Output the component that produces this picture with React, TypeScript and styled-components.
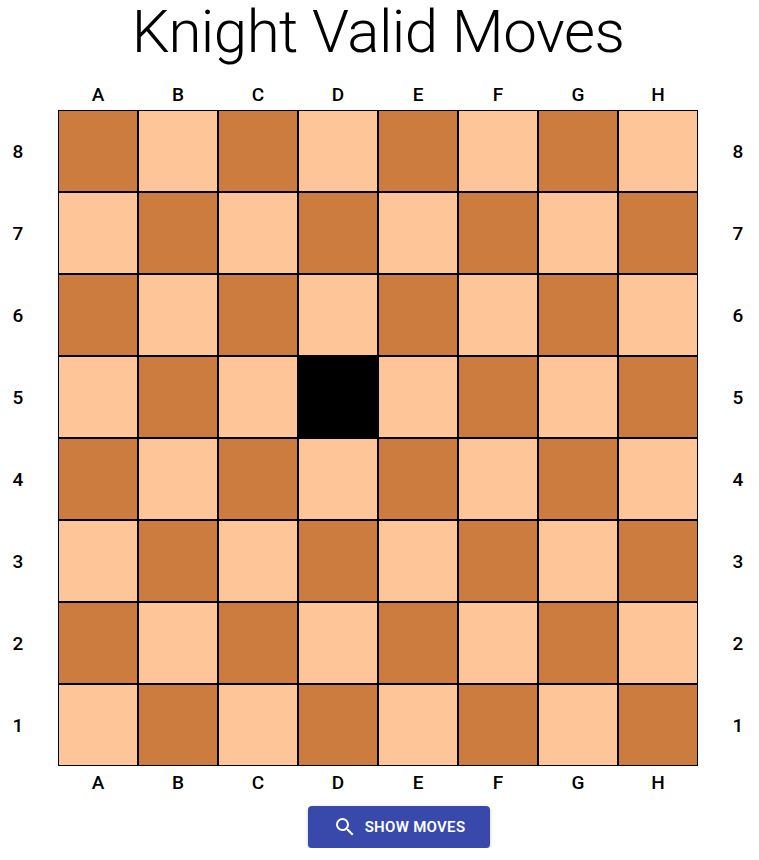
import { Fragment } from "react";
import styled, { createGlobalStyle } from "styled-components";

const GlobalStyle = createGlobalStyle`
  html, body {
    margin: 0;
    padding: 0;
    background: #fff;
    font-family: Roboto, "Liberation Sans", sans-serif;
    color: #000;
  }
`;

const Page = styled.div`
  width: 756px;
  display: flex;
  flex-direction: column;
  align-items: center;
`;

const Title = styled.h1`
  margin: 0;
  height: 72px;
  font-size: 60px;
  font-weight: 300;
  line-height: 64px;
  letter-spacing: -0.5px;
`;

const BoardGrid = styled.div`
  width: 100%;
  display: grid;
  grid-template-columns: 36px 22px repeat(8, 80px) 22px 36px;
  grid-template-rows: 38px repeat(8, 82px) 34px;
`;

const FileLabel = styled.div<{ $column: number; $top?: boolean }>`
  grid-column: ${(p) => p.$column};
  display: flex;
  align-items: center;
  justify-content: center;
  padding-top: ${(p) => (p.$top ? "6px" : "0")};
  padding-bottom: ${(p) => (p.$top ? "0" : "2px")};
  font-size: 19px;
  font-weight: 500;
`;

const RankLabel = styled.div<{ $column: number }>`
  grid-column: ${(p) => p.$column};
  display: flex;
  align-items: center;
  justify-content: center;
  font-size: 19px;
  font-weight: 500;
`;

const Square = styled.div<{ $color: string; $column: number }>`
  grid-column: ${(p) => p.$column};
  box-sizing: border-box;
  border: 1px solid #000;
  background: ${(p) => p.$color};
`;

const ShowButton = styled.button`
  margin-top: 6px;
  margin-left: 42px;
  width: 182px;
  height: 42px;
  display: flex;
  align-items: center;
  justify-content: center;
  gap: 8px;
  padding: 0;
  border: 0;
  border-radius: 4px;
  background: #3949ab;
  color: #fff;
  font-family: Roboto, "Liberation Sans", sans-serif;
  font-size: 15px;
  font-weight: 600;
  letter-spacing: 0.3px;
  text-transform: uppercase;
  box-shadow: 0 3px 1px -2px rgba(0, 0, 0, 0.2), 0 2px 2px 0 rgba(0, 0, 0, 0.14),
    0 1px 5px 0 rgba(0, 0, 0, 0.12);
`;

const files = ["A", "B", "C", "D", "E", "F", "G", "H"];
const ranks = [8, 7, 6, 5, 4, 3, 2, 1];

const squareColor = (file: string, rank: number, fileIndex: number) => {
  if (file === "D" && rank === 5) return "#000";
  return (fileIndex + (8 - rank)) % 2 === 0 ? "#cc7c3e" : "#fec698";
};

const SearchIcon = () => (
  <svg width="24" height="24" viewBox="0 0 24 24" fill="#fff">
    <path d="M15.5 14h-.79l-.28-.27A6.471 6.471 0 0 0 16 9.5 6.5 6.5 0 1 0 9.5 16c1.61 0 3.09-.59 4.23-1.57l.27.28v.79l5 4.99L20.49 19l-4.99-5zm-6 0C7.01 14 5 11.99 5 9.5S7.01 5 9.5 5 14 7.01 14 9.5 11.99 14 9.5 14z" />
  </svg>
);

const App = () => {
  return (
    <Page>
      <GlobalStyle />
      <Title>Knight Valid Moves</Title>
      <BoardGrid>
        {files.map((file, i) => (
          <FileLabel key={file} $column={i + 3} $top>
            {file}
          </FileLabel>
        ))}
        {ranks.map((rank) => (
          <Fragment key={rank}>
            <RankLabel $column={1}>{rank}</RankLabel>
            {files.map((file, i) => (
              <Square
                key={file + rank}
                $column={i + 3}
                $color={squareColor(file, rank, i)}
              />
            ))}
            <RankLabel $column={12}>{rank}</RankLabel>
          </Fragment>
        ))}
        {files.map((file, i) => (
          <FileLabel key={file} $column={i + 3}>
            {file}
          </FileLabel>
        ))}
      </BoardGrid>
      <ShowButton>
        <SearchIcon />
        Show Moves
      </ShowButton>
    </Page>
  );
};

export default App;
